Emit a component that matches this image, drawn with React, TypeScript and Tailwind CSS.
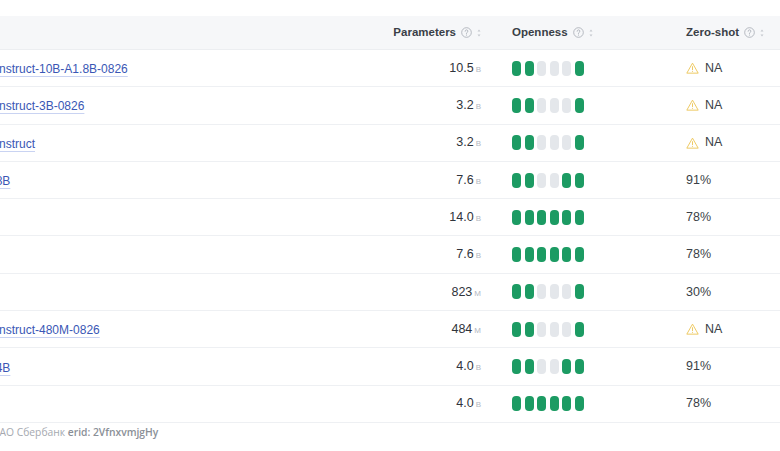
import React from 'react';

type Row = {
  name: string;
  size: string;
  unit: 'B' | 'M';
  open: number[]; // 1 = filled, 0 = empty
  zero: string | null; // null = NA
};

const rows: Row[] = [
  { name: 'Model-Instruct-10B-A1.8B-0826', size: '10.5', unit: 'B', open: [1, 1, 0, 0, 0, 1], zero: null },
  { name: 'Model-Instruct-3B-0826', size: '3.2', unit: 'B', open: [1, 1, 0, 0, 0, 1], zero: null },
  { name: 'Model-Instruct', size: '3.2', unit: 'B', open: [1, 1, 0, 0, 0, 1], zero: null },
  { name: 'Model-8B', size: '7.6', unit: 'B', open: [1, 1, 0, 0, 1, 1], zero: '91%' },
  { name: 'Phi-4', size: '14.0', unit: 'B', open: [1, 1, 1, 1, 1, 1], zero: '78%' },
  { name: 'Yi-1.5', size: '7.6', unit: 'B', open: [1, 1, 1, 1, 1, 1], zero: '78%' },
  { name: 'Falcon', size: '823', unit: 'M', open: [1, 1, 0, 0, 0, 1], zero: '30%' },
  { name: 'Model-Instruct-480M-0826', size: '484', unit: 'M', open: [1, 1, 0, 0, 0, 1], zero: null },
  { name: 'Model-4B', size: '4.0', unit: 'B', open: [1, 1, 0, 0, 1, 1], zero: '91%' },
  { name: 'Phi-3', size: '4.0', unit: 'B', open: [1, 1, 1, 1, 1, 1], zero: '78%' },
];

const HelpIcon = () => (
  <svg width="11" height="11" viewBox="0 0 16 16" fill="none" className="text-[#a8adb5]">
    <circle cx="8" cy="8" r="7" stroke="currentColor" strokeWidth="1.2" />
    <path d="M6 6.2a2 2 0 1 1 2.8 1.8c-.5.25-.8.6-.8 1.2v.5" stroke="currentColor" strokeWidth="1.2" strokeLinecap="round" />
    <circle cx="8" cy="11.6" r="0.8" fill="currentColor" />
  </svg>
);

const SortIcon = () => (
  <svg width="4" height="8" viewBox="0 0 4 8" className="text-[#c4c8ce]">
    <path d="M2 0.5 L3.5 2.5 H0.5 Z M2 7.5 L3.5 5.5 H0.5 Z" fill="currentColor" />
  </svg>
);

const WarnIcon = () => (
  <svg width="13" height="12" viewBox="0 0 24 22" fill="none" className="text-[#ecc557]">
    <path d="M12 2 L22.5 20.5 H1.5 Z" stroke="currentColor" strokeWidth="1.7" strokeLinejoin="round" />
    <path d="M12 8.5 V14" stroke="currentColor" strokeWidth="1.7" strokeLinecap="round" />
    <circle cx="12" cy="17" r="1.1" fill="currentColor" />
  </svg>
);

const HeaderLabel = ({ text }: { text: string }) => (
  <div className="flex items-center gap-[5px]">
    <span className="text-[11.5px] font-bold text-[#3a3f47]">{text}</span>
    <HelpIcon />
    <SortIcon />
  </div>
);

export default function App() {
  return (
    <div className="w-[780px] h-[451px] bg-white overflow-hidden pt-4" style={{ fontFamily: '"Liberation Sans", Arial, sans-serif' }}>
      {/* header */}
      <div className="flex h-[34px] items-center bg-[#f6f7f9] border-b border-[#eceef1]">
        <div className="w-[380px]" />
        <div className="w-[101px] pl-3 flex justify-end">
          <HeaderLabel text="Parameters" />
        </div>
        <div className="w-[193px] pl-[31px]">
          <HeaderLabel text="Openness" />
        </div>
        <div className="flex-1 pl-3">
          <HeaderLabel text="Zero-shot" />
        </div>
      </div>

      {/* rows */}
      {rows.map((r, i) => (
        <div key={i} className="flex h-[37.3px] items-center border-b border-[#eef0f3]">
          <div className="w-[380px] overflow-hidden">
            <div className="-ml-[41px] whitespace-nowrap">
              <a className="text-[12px] text-[#3a57b5] underline decoration-[#c9d3f2] underline-offset-[3px]">
                {r.name}
              </a>
            </div>
          </div>
          <div className="w-[101px] pl-3 flex justify-end items-baseline">
            <span className="text-[12.5px] text-[#2f343b]">{r.size}</span>
            <span className="ml-[2px] text-[8px] text-[#b3b8bf]">{r.unit}</span>
          </div>
          <div className="w-[193px] pl-[31px] flex gap-[3.5px]">
            {r.open.map((o, j) => (
              <div
                key={j}
                className={o ? 'w-[9px] h-[15px] rounded-[4px] bg-[#1c9b63]' : 'w-[9px] h-[15px] rounded-[4px] bg-[#e4e7eb]'}
              />
            ))}
          </div>
          <div className="flex-1 pl-3 flex items-center text-[12.5px] text-[#3a3f47]">
            {r.zero === null ? (
              <>
                <WarnIcon />
                <span className="ml-[6px]">NA</span>
              </>
            ) : (
              <span>{r.zero}</span>
            )}
          </div>
        </div>
      ))}

      {/* footer */}
      <div className="pt-[2px] overflow-hidden">
        <div className="-ml-[8px] whitespace-nowrap text-[10.3px]" style={{ fontFamily: '"Open Sans", sans-serif' }}>
          <span className="text-[#a5a9b0]">ПАО Сбербанк </span>
          <span className="font-semibold text-[#8a8f97]">erid: 2VfnxvmjgHy</span>
        </div>
      </div>
    </div>
  );
}
